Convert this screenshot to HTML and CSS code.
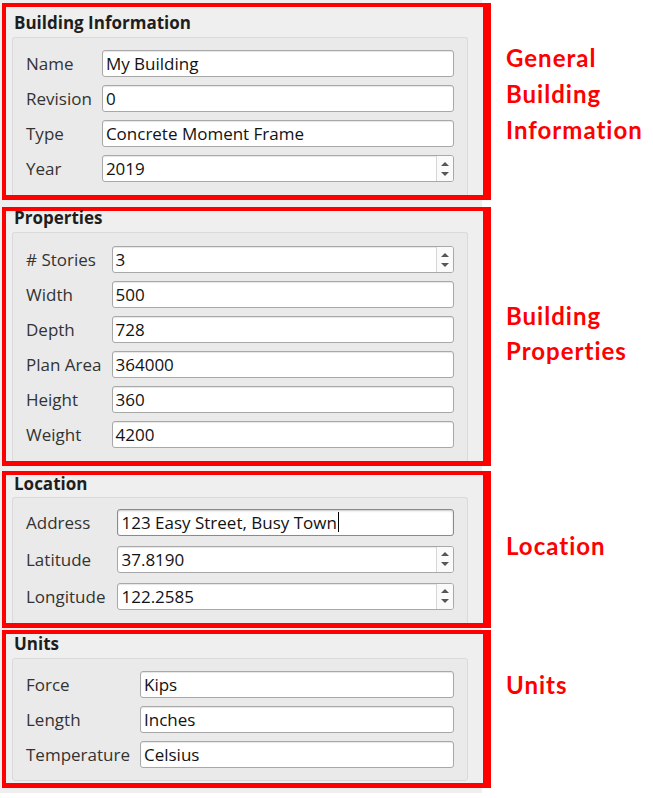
FILE: index.html
```html
<!DOCTYPE html>
<html>
<head>
<meta charset="utf-8">
<link rel="stylesheet" href="styles.css">
</head>
<body>
<div class="page">
  <section class="group group--info">
    <div class="group-title">Building Information</div>
    <div class="frame">
      <div class="form">
        <span class="lbl">Name</span><div class="field"><span class="val">My Building</span></div>
        <span class="lbl">Revision</span><div class="field"><span class="val">0</span></div>
        <span class="lbl">Type</span><div class="field"><span class="val">Concrete Moment Frame</span></div>
        <span class="lbl">Year</span><div class="field spin"><span class="val">2019</span><span class="spin-btns"><i class="up"></i><i class="down"></i></span></div>
      </div>
    </div>
  </section>
  <div class="note note--info">General<br>Building<br>Information</div>

  <section class="group group--props">
    <div class="group-title">Properties</div>
    <div class="frame">
      <div class="form">
        <span class="lbl"># Stories</span><div class="field spin"><span class="val">3</span><span class="spin-btns"><i class="up"></i><i class="down"></i></span></div>
        <span class="lbl">Width</span><div class="field"><span class="val">500</span></div>
        <span class="lbl">Depth</span><div class="field"><span class="val">728</span></div>
        <span class="lbl">Plan Area</span><div class="field"><span class="val">364000</span></div>
        <span class="lbl">Height</span><div class="field"><span class="val">360</span></div>
        <span class="lbl">Weight</span><div class="field"><span class="val">4200</span></div>
      </div>
    </div>
  </section>
  <div class="note note--props">Building<br>Properties</div>

  <section class="group group--loc">
    <div class="group-title">Location</div>
    <div class="frame">
      <div class="form">
        <span class="lbl">Address</span><div class="field focus"><span class="val">123 Easy Street, Busy Town</span><span class="caret"></span></div>
        <span class="lbl">Latitude</span><div class="field spin"><span class="val">37.8190</span><span class="spin-btns"><i class="up"></i><i class="down"></i></span></div>
        <span class="lbl">Longitude</span><div class="field spin"><span class="val">122.2585</span><span class="spin-btns"><i class="up"></i><i class="down"></i></span></div>
      </div>
    </div>
  </section>
  <div class="note note--loc">Location</div>

  <section class="group group--units">
    <div class="group-title">Units</div>
    <div class="frame">
      <div class="form">
        <span class="lbl">Force</span><div class="field"><span class="val">Kips</span></div>
        <span class="lbl">Length</span><div class="field"><span class="val">Inches</span></div>
        <span class="lbl">Temperature</span><div class="field"><span class="val">Celsius</span></div>
      </div>
    </div>
  </section>
  <div class="note note--units">Units</div>
</div>
</body>
</html>
```
FILE: styles.css
```css
html, body {
  margin: 0;
  background: #ffffff;
}

.page {
  display: grid;
  grid-template-columns: 491px 1fr;
  align-items: start;
  width: 653px;
  height: 793px;
  box-sizing: border-box;
  padding: 3px 0 5px 0;
  background: linear-gradient(to right, #efefef 482px, #ffffff 482px);
  font-family: "Open Sans", "Noto Sans", sans-serif;
}

.group {
  width: 489px;
  margin-left: 2px;
  box-sizing: border-box;
  border-style: solid;
  border-color: #fe0000;
  border-width: 4px 8px 5px 4px;
  background: #efefef;
}

.group--props { margin-top: 7px; }
.group--loc { margin-top: 4px; }
.group--units { margin-top: 2px; }

.group-title {
  height: 30px;
  box-sizing: border-box;
  display: flex;
  align-items: flex-end;
  padding: 0 0 5px 8px;
  font-size: 17px;
  font-weight: 700;
  line-height: 18px;
  color: #1e1e1e;
}

.group--props .group-title { height: 21px; }
.group--loc .group-title { height: 22px; padding-bottom: 4px; }
.group--units .group-title { height: 24px; }

.frame {
  margin: 0 15px 0 6px;
  border: 1px solid #dadada;
  border-bottom: 0;
  border-radius: 3px 3px 0 0;
  background: #eaeaea;
  padding: 12px 13px 13px 13px;
}

.group--props .frame { padding: 13px 13px 13px 13px; }
.group--loc .frame { padding: 11px 13px 13px 13px; }
.group--units .frame { padding: 12px 13px 12px 13px; border-bottom: 1px solid #dadada; border-radius: 3px; margin-bottom: 2px; }

.form {
  display: grid;
  grid-template-columns: auto 1fr;
  column-gap: 10px;
  row-gap: 8px;
  align-items: center;
}

.group--loc .form { row-gap: 10px; column-gap: 12px; }

.lbl {
  font-size: 17px;
  color: #333333;
  white-space: nowrap;
}

.field {
  height: 27px;
  box-sizing: border-box;
  display: flex;
  align-items: center;
  padding-left: 3px;
  border: 1px solid #a8a8a8;
  border-radius: 3px;
  background: #ffffff;
  box-shadow: inset 0 1px 1px rgba(0, 0, 0, 0.10);
  font-size: 17px;
  color: #121212;
  white-space: nowrap;
  overflow: hidden;
}

.field.focus {
  border-color: #8a8a8a;
  box-shadow: inset 0 1px 2px rgba(0, 0, 0, 0.22);
}

.caret {
  width: 1px;
  height: 20px;
  margin-left: 1px;
  background: #000000;
}

.spin-btns {
  margin-left: auto;
  align-self: stretch;
  width: 16px;
  border-left: 1px solid #d6d6d6;
  background: #fafafa;
  display: flex;
  flex-direction: column;
  align-items: center;
  justify-content: center;
  gap: 6px;
}

.spin-btns i {
  display: block;
  width: 0;
  height: 0;
  border-left: 4px solid transparent;
  border-right: 4px solid transparent;
}

.spin-btns .up { border-bottom: 4px solid #555555; }
.spin-btns .down { border-top: 4px solid #555555; }

.note {
  padding-left: 15px;
  font-family: Lato, "Open Sans", sans-serif;
  font-weight: 700;
  font-size: 24px;
  letter-spacing: 1px;
  line-height: 36px;
  color: #fe0000;
}

.note--info { padding-top: 37px; }
.note--props { padding-top: 98px; line-height: 35px; }
.note--loc { padding-top: 61px; }
.note--units { padding-top: 39px; }
```
